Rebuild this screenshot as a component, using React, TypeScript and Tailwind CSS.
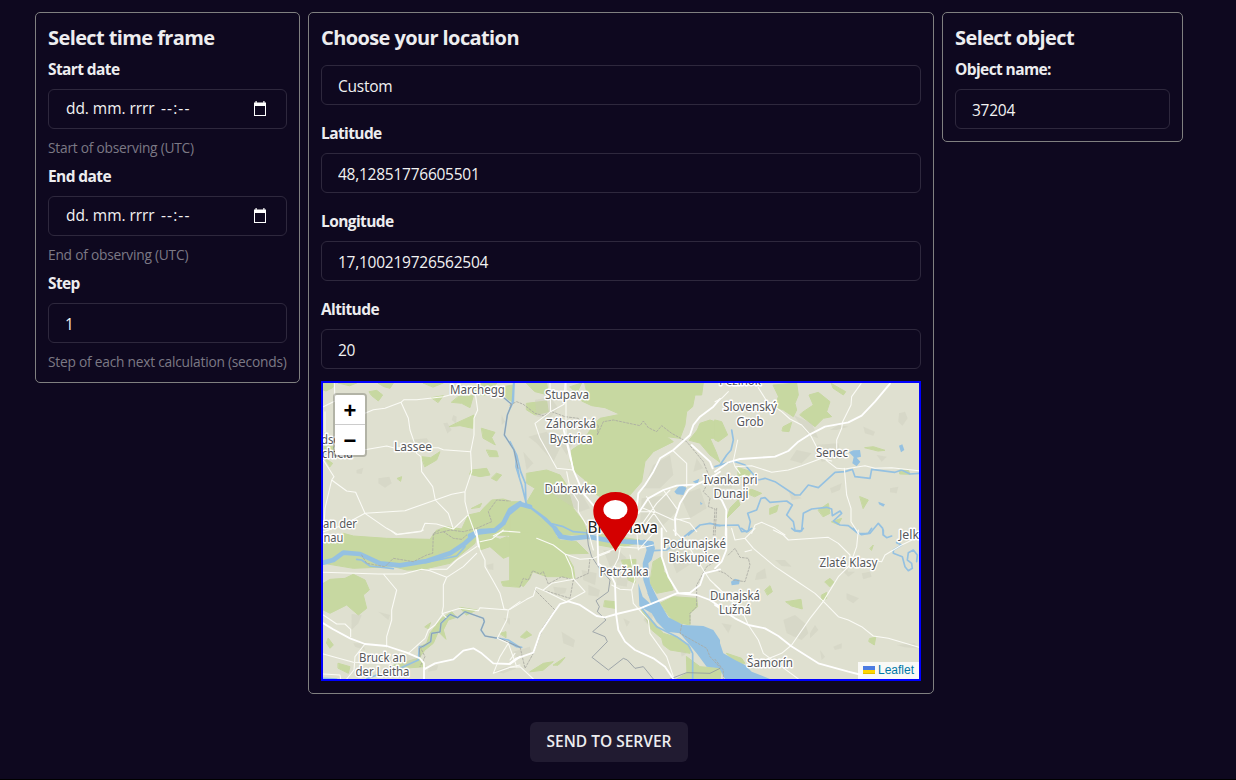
import React from "react";

type Tile = {
  x: number;
  y: number;
  wood: string;
  town: string;
  lake: string;
  river: string;
  stream: string;
  road: string;
  major: string;
  border: string;
  dashed: string;
};

// Every tile is drawn at three times its size on the page.
const tiles: Tile[] = [
  {
    x: 310,
    y: 375,
    wood: "M85 24L140 24L120 32ZM178 50L200 46L218 60L205 78L185 62ZM205 24L250 24L240 40L222 35ZM40 24L75 24L68 38L48 48L40 45ZM365 68L400 62L385 82ZM340 24L400 24L370 36ZM445 65L490 62L480 98L455 85L425 82ZM490 34L520 24L560 24L545 50L520 62L500 55ZM580 35L608 30L606 80L590 70ZM448 140L492 120L488 160L450 152L418 155ZM515 160L555 172L545 188L556 210L520 190ZM530 225L560 228L565 245L540 245ZM485 285L530 280L540 300L510 305L480 298ZM560 295L575 300L560 318L545 310ZM335 245L362 248L390 230L380 255L345 275ZM262 310L275 305L272 318ZM40 212L70 215L70 240L45 235ZM45 250L68 265L60 275ZM370 480L385 464L410 455L455 462L475 420L510 412L520 400L545 375L580 372L605 380L630 380L630 480ZM485 400L515 385L510 396Z",
    town: "M205 310L238 305L245 325L225 338L205 325ZM400 145L412 143L425 165L412 175ZM430 120L440 125L438 145L425 135ZM140 285L160 278L155 297L140 295ZM300 195L350 190L370 215L340 230L300 215ZM575 120L585 140L575 150Z",
    lake: "",
    river: "M480 482L510 468L555 466L580 445L600 405L630 385",
    stream: "M611 24L607 85M605 88L592 120L583 180L612 225L628 305M560 50L605 88",
    road: "M40 95L75 78L73 24M165 115L190 104L225 100L273 82L282 74L320 74L400 65L450 52L500 54M273 82L295 130L300 165L312 200L320 235L333 245L335 290L368 335L376 375L415 415L430 462M165 224L230 213L250 218L385 218L400 224L482 230M495 50L503 105L492 130L492 180L482 230L485 290L465 350L465 380L475 420L497 480M40 255L72 305L65 315L110 348L137 352L165 415L230 460L262 478L335 468L345 445L380 447L430 462L472 422M65 315L45 400L42 455M165 415L285 407L376 375L425 358L465 350M40 470L100 450L165 415M550 482L580 468L630 472M45 170L45 110",
    major: "",
    border: "M560 50L605 88L592 120L583 180L612 225L624 280",
    dashed: "M370 478L420 465L460 470L500 460L545 440L535 410L560 375L600 378",
  },
  {
    x: 510,
    y: 375,
    wood: "M225 24L580 24L575 60L555 60L548 95L530 110L525 150L510 190L470 185L490 200L430 230L405 260L395 320L360 360L270 365L230 340L225 315L195 290L180 260L185 225L215 205L250 150L270 130L330 118L285 98L245 92L215 78L230 55ZM50 24L110 24L115 60L75 50ZM180 35L215 24L200 55ZM50 85L110 78L115 110L75 120L50 105ZM50 295L110 285L150 300L170 330L190 400L220 440L235 480L130 480L45 390L75 340L50 325ZM0 385L50 390L130 480L0 480ZM538 195L562 165L570 145L600 135L630 145L630 190L600 190L618 230L630 262L600 240L570 205ZM290 440L340 430L330 470Z",
    town: "M75 75L120 65L145 100L120 130L80 125ZM55 185L110 170L150 220L130 260L80 205ZM400 340L430 270L480 240L490 300L450 340ZM40 230L70 265L50 285ZM125 170L190 205L170 240ZM395 370L480 360L500 410L440 470L390 440ZM510 360L570 340L590 400L540 430ZM560 250L580 280L550 290ZM100 340L200 330L240 400L210 410Z",
    lake: "M493 350L510 330L530 338L520 360L500 358ZM548 320L568 311L563 327ZM570 380L578 386L572 390Z",
    river: "M0 412L30 387L60 395",
    stream: "M12 24L10 80L0 100M20 240L18 275L35 330L50 390M0 200L20 240L32 290L46 325L48 388L95 425L150 478M60 395L110 432L155 478M120 445L160 455L190 470L270 477M535 480L570 450L600 445L630 452",
    road: "M120 24L122 110L75 145L90 190L140 280L190 285M122 110L162 88L165 24M168 24L168 180L182 240L190 285M170 290L180 340L205 380L205 410L230 450M490 228L530 265L530 335M385 410L435 410L490 435L540 430M460 345L500 400M480 345L440 385L380 470M400 400L430 412L470 470M410 365L435 410L405 450M495 430L540 445L560 470",
    major: "M160 160L190 285L220 355L262 405M630 72L610 95L570 125L550 150L540 180L490 225L450 250L430 290L405 330L385 355L380 400M385 415L415 370L460 345L500 332L560 328L600 310L630 290M497 480L495 430L510 385L535 345L560 328M545 210L600 260L608 280",
    border: "",
    dashed: "M0 90L20 80L40 88L75 115L100 122L125 110L165 125L205 130L225 152L265 150L262 180L280 140L310 135L390 152L400 138L415 158L440 170L455 152L485 175L530 200L580 260L600 310L580 350L600 370L595 395L615 402L610 480",
  },
  {
    x: 715,
    y: 375,
    wood: "M175 30L245 24L250 60L240 85L245 105L235 125L205 105L180 95L190 65ZM265 110L295 90L282 60L310 52L345 80L335 110L350 125L325 130L300 155L255 120ZM350 26L392 50L385 60L355 40ZM0 135L20 140L38 180L10 200L0 195ZM205 155L230 142L222 170L202 168ZM435 365L460 375L445 400ZM70 278L110 290L95 310L70 305ZM165 400L190 390L185 410L165 418ZM310 405L340 385L345 415L325 425ZM555 285L580 285L585 298L555 297ZM70 375L75 390L35 430L45 400ZM85 350L110 343L140 355L120 365ZM450 218L475 215L510 226L490 228ZM350 440L380 430L370 448Z",
    town: "M552 115L570 110L578 130L562 152L550 140ZM300 210L370 205L380 250L320 260ZM245 225L290 235L260 265L225 255ZM445 155L480 170L475 182L450 175ZM345 340L380 325L375 345L350 355ZM525 340L550 335L545 355L525 352ZM485 240L515 245L500 260ZM5 300L60 300L50 340L0 340ZM220 345L260 370L230 375ZM235 120L290 145L310 190L280 180ZM345 165L370 150L400 155L365 165Z",
    lake: "M402 232L415 226L435 225L438 245L425 248L436 260L425 274L412 265L416 246ZM552 212L562 208L568 225L558 232ZM490 380L510 388L505 395L492 388Z",
    river: "",
    stream: "M15 270L35 240L48 225L55 195L50 165M0 275L55 258L90 270L130 315L150 310L180 320L240 360L255 360L280 330L310 338L360 292L390 290L412 283L420 305L465 310L470 283L540 292L560 285L585 297L612 295M0 452L70 450L80 470L100 468L106 440L98 415L125 405L138 370L150 368L165 382L215 378L232 390L215 420L235 440L240 466L260 468L265 415L290 402L335 397L350 402L352 422L375 408L380 415L355 438L375 450L400 452L430 476L465 475L490 445L503 460L505 480",
    road: "M130 38L155 78L200 110L225 132L260 150L285 178L320 245L365 280L390 282L450 272L480 280L530 278L612 287M438 26L410 65L408 90L383 140L380 160L365 195L365 225M55 260L60 275L110 272L170 292L220 285L260 272L320 250L350 258M388 280L395 360L408 400L408 440L432 478M0 80L20 70L40 50M68 195L62 225L55 258M110 475L120 450L140 442L180 460L210 480M0 330L90 300M60 275L75 295",
    major: "M0 290L40 262L75 252L180 245L220 228L250 200L285 178L330 155L400 142L440 122L480 80L525 26M0 360L20 375L34 405L32 480",
    border: "",
    dashed: "M5 400L0 480",
  },
  {
    x: 310,
    y: 530,
    wood: "M40 40L75 25L100 10L130 18L230 25L360 28L380 0L500 5L495 40L420 100L330 120L290 120L250 110L130 115L40 100ZM40 160L60 148L105 145L130 133L165 150L178 180L160 195L170 235L145 255L110 225L60 250L40 240ZM505 5L570 28L590 20L630 35L630 90L605 75L580 85L540 50L510 60ZM575 155L630 148L630 172L580 168ZM55 325L70 345L60 355L50 340ZM395 265L425 245L440 262L415 270L400 300L408 328L385 305L370 340L345 360L330 380L345 410L280 415L250 405L325 385L330 350L350 340L360 310ZM85 400L120 410L115 430L85 415ZM570 310L588 305L588 322ZM345 290L362 278L355 295ZM450 232L500 240L470 255Z",
    town: "M125 252L155 255L145 280L125 300ZM205 245L240 255L235 270ZM385 65L410 60L425 80L400 90ZM355 410L385 405L380 420L355 425ZM265 370L325 380L310 410L260 400ZM130 340L160 340L165 360L135 350ZM40 195L55 190L60 205ZM550 425L590 410L620 415L580 430ZM580 265L600 265L600 285ZM530 105L550 100L550 120L535 118Z",
    lake: "",
    river: "M40 98L70 90L100 68L150 72L210 100L270 106L350 93L420 70L465 40L500 8L550 2",
    stream: "M140 88L155 90L180 108L250 116M345 98L440 78L465 50M270 415L325 390L328 350L340 350L362 335L365 310L390 306L393 280L420 253L443 263L465 245L520 265L523 275L513 300L525 318L570 326L595 330L630 352M170 447L200 435M40 445L80 447",
    road: "M40 127L205 132L280 132L335 118L360 122L410 142L460 110L500 70M220 132L260 180L245 240L245 270L230 320L230 350M360 118L410 118L440 90L500 50M410 142L400 165L400 230L396 250L408 262M500 8L510 60L525 90L525 110L548 150L570 190L582 237L595 240L590 270L562 325M630 215L595 240L510 233L505 242L450 235L400 250L375 285L355 300L345 325L295 370M40 255L80 282L105 282L122 298L122 320M40 372L130 397L250 402M165 342L135 380L132 420L110 447M550 430L600 412L630 405M595 340L570 380L550 430M595 340L620 410M562 325L595 340M510 35L545 28L580 0M40 432L90 435L92 447M245 3L258 14L330 5L340 0",
    major: "M40 280L68 297L120 325L165 342L230 348L290 368L330 385L342 400L342 447M342 418L375 400L430 388L460 362L490 355L515 370L550 400L600 402L630 380M498 0L506 50",
    border: "M330 380L328 355L362 335L365 310L390 306L393 280L420 253L443 263L465 245L520 265L523 275L513 300L525 318L570 326L630 352",
    dashed: "M155 75L170 100L225 110L250 85L310 95L350 75L368 70L370 10L390 0M400 5L430 25L455 28L470 15M330 350L345 380L330 410",
  },
  {
    x: 510,
    y: 530,
    wood: "M0 8L130 10L150 30L200 35L235 70L168 72L190 110L195 145L155 140L110 140L68 125L60 145L40 170L25 160L0 168ZM265 12L390 30L380 40L320 55L265 45ZM430 95L455 80L462 125L475 140L490 180L440 190L420 160ZM450 220L490 200L560 205L563 230L540 250L540 285L490 275ZM395 240L430 275L460 310L510 325L540 350L540 370L480 360L460 345L455 325L425 300ZM285 212L315 215L315 235L282 230ZM32 320L50 303L65 315L45 325ZM130 405L165 382L155 395L145 405ZM60 425L100 400L130 395L100 420ZM530 380L570 410L630 415L630 447L500 447L530 430ZM335 90L378 88L375 160L355 150Z",
    town: "M155 305L195 330L190 352L160 340ZM215 120L260 130L255 165L220 150ZM235 165L270 180L265 200L235 195ZM320 130L355 140L350 170L320 165ZM280 60L330 65L350 85L300 110ZM470 20L520 50L560 90L500 130L480 80ZM130 170L170 175L165 190L135 195ZM445 200L420 290L400 270ZM510 350L530 370L515 380ZM340 265L360 275L350 290ZM10 365L60 350L65 370L20 385Z",
    lake: "M400 28L430 38L435 55L425 90L415 100L420 160L450 220L475 262L520 285L580 288L610 300L630 330L630 415L590 410L560 370L510 310L470 305L440 275L425 250L388 228L385 160L398 200L425 225L400 150L398 100L410 60Z",
    river: "M135 -5L150 20L185 25L235 20L300 32L400 38L425 40",
    stream: "M430 62L470 60L520 22L545 2M395 235L440 290L500 320L535 345L548 370L548 447M0 338L20 350L35 352M415 190L440 235L460 285",
    road: "M0 238L50 208L70 198L78 172L110 185L170 215L225 185L190 145L185 115L165 72L130 45L80 25M165 72L210 88L250 85L300 65M265 75L330 50L390 55L430 45M305 165L330 178L365 180L370 220L415 270L420 310L470 380L490 440M330 55L325 85L312 110L315 140M360 75L375 150L365 180M580 120L600 150L630 178M380 0L385 60L430 10M0 412L30 410L70 447M0 390L15 370M490 0L530 40L580 120M100 180L125 160L190 148M235 5L250 60",
    major: "M0 400L20 385L70 368L90 310L130 250L150 222L175 214L210 225L260 258L285 262L320 252L390 235L440 215L500 190L540 188L570 165L582 130L630 118M265 100L300 130L315 160L318 250L325 300L345 335L375 360L430 385L465 410L490 447M262 0L265 105M455 -5L455 80L475 140L505 190L560 195L600 210L630 230",
    border: "M230 0L235 45L245 80L265 110L300 150L295 185L258 212L268 230L262 245L288 270L248 305L285 320L292 335L246 382L295 420L340 385L352 390L375 415L400 410L430 447M480 447L530 428L600 430L630 415",
    dashed: "M30 170L40 145L55 150L68 122L90 132L100 125L115 162L155 140L190 150L180 205L100 180M240 85L235 130L190 150M75 180L135 240L100 290L70 370L45 415L30 350M630 85L590 110L560 165L560 230L540 250L540 280M515 285L510 310L590 355L600 380L630 412",
  },
  {
    x: 715,
    y: 530,
    wood: "M150 180L165 167L172 185L158 195ZM213 215L258 208L262 237L230 228ZM330 155L345 145L357 157L345 170ZM465 325L482 322L478 345L462 335ZM35 370L80 385L90 400L60 400ZM0 385L20 420L15 447L0 447ZM465 55L475 45L470 60ZM320 195L335 187L335 205L320 212Z",
    town: "M125 130L150 115L155 145L120 150ZM205 270L240 255L270 280L280 310L260 330L215 310ZM395 190L432 205L415 220L395 208ZM440 130L465 125L470 140L445 148ZM285 310L300 285L310 300L285 325ZM545 345L600 340L605 355L570 352ZM180 90L210 90L230 110L200 108ZM355 350L380 340L380 355L360 360ZM315 360L330 380L320 390ZM20 280L50 285L40 310ZM385 90L400 125L420 125L400 140L380 120Z",
    lake: "M48 155L60 146L75 150L72 163L50 166ZM0 315L12 330L25 370L60 390L90 405L110 425L165 447L30 447L0 390Z",
    river: "",
    stream: "M415 -5L430 10L440 14L460 10L470 -5M230 -5L240 3L255 5L265 -5M80 -5L95 6L110 -5M505 0L505 15L515 23L530 18M575 10L545 38L560 45L535 60L535 70L562 80L570 110L580 122L592 115L590 100L577 90L580 68L595 60L607 75L605 95",
    road: "M60 30L90 25L115 55L180 110L240 150L300 190L325 214L370 260L400 270L440 290L475 318L520 325L612 352M175 0L205 15L220 30L340 22L370 40L405 75L405 105M430 0L425 50L405 105L370 140L325 214L285 265L230 345L200 370L150 390M0 165L80 240L100 285L130 330L145 370L200 410L250 447M612 20L560 45L510 75L500 95L440 85M60 30L90 25L120 -5M60 30L50 -5M90 65L110 60",
    major: "M0 225L60 265L100 285L150 295L190 318L228 348L310 400L400 425L440 435M34 -5L34 60L20 95L0 115",
    border: "",
    dashed: "M40 75L60 55L75 82L100 85L105 105L90 155L55 150L30 130L0 118M0 388L25 420L25 447",
  },
];

type Label = [string, number, number, number];

// text, left edge, baseline, width
const labels: Label[] = [
  ["Marchegg", 450, 393.5, 55],
  ["Lassee", 394, 450.5, 38],
  ["Stupava", 545, 398.5, 44],
  ["Záhorská", 546, 428, 50],
  ["Bystrica", 549.5, 442.5, 43],
  ["Dúbravka", 544.5, 492.5, 52],
  ["Pezinok", 719, 385, 42],
  ["Slovenský", 723, 411, 54],
  ["Grob", 736.5, 425.5, 27],
  ["Senec", 816, 456.5, 32],
  ["Ivanka pri", 703.5, 483.5, 54],
  ["Dunaji", 713.5, 497.5, 35],
  ["Podunajské", 663, 547.5, 63],
  ["Biskupice", 668.5, 561.5, 51],
  ["Petržalka", 599.5, 575.5, 49],
  ["Zlaté Klasy", 819.5, 566.5, 58],
  ["Dunajská", 710, 599.5, 50],
  ["Lužná", 719, 613.5, 32],
  ["Šamorín", 747, 666.5, 46],
  ["Bruck an", 359, 661.5, 47],
  ["der Leitha", 355.5, 675.5, 54],
  ["an der", 323, 527.5, 34],
  ["nau", 323.5, 541.5, 20],
  ["dsc", 321, 443.5, 18],
  ["chfeld", 322, 458, 31],
  ["Jelka", 899, 538.5, 27],
];

function Layer({ children }: { children: (t: Tile) => React.ReactNode }) {
  return (
    <>
      {tiles.map((t) => (
        <g key={`${t.x}-${t.y}`} transform={`translate(${t.x} ${t.y}) scale(0.33333)`}>
          {children(t)}
        </g>
      ))}
    </>
  );
}

function MapView() {
  return (
    <div className="relative mt-3 h-[300px] w-full overflow-hidden border-2 border-[#0000ff] bg-[#dfe0d0]">
      <svg className="block h-[296px] w-[596px]" viewBox="323 383 596 296" strokeLinejoin="round" strokeLinecap="round" fill="none">
        <Layer>{(t) => <path d={t.wood} fill="#c7d8a1" stroke="#c7d8a1" strokeWidth="3" />}</Layer>
        <Layer>{(t) => <path d={t.town} fill="#c9cabb" fillOpacity="0.36" />}</Layer>
        <Layer>
          {(t) => (
            <>
              <path d={t.lake} fill="#95c1e1" />
              <path d={t.river} stroke="#95c1e1" strokeWidth="14" />
              <path d={t.stream} stroke="#95c1e1" strokeWidth="5" />
            </>
          )}
        </Layer>
        <Layer>
          {(t) => (
            <>
              <path d={t.border} stroke="#8e979f" strokeOpacity="0.8" strokeWidth="3" />
              <path d={t.dashed} stroke="#a9aaa2" strokeWidth="2.5" strokeDasharray="6 5" />
            </>
          )}
        </Layer>
        <Layer>
          {(t) => (
            <>
              <path d={t.road} stroke="#fbfbf6" strokeWidth="3.2" />
              <path d={t.major} stroke="#ffffff" strokeWidth="5.5" />
            </>
          )}
        </Layer>
        <g fontFamily="'Noto Sans', sans-serif" fontSize="12" fill="#58595b" stroke="#ffffff" strokeWidth="2.8" style={{ paintOrder: "stroke" }}>
          {labels.map(([text, x, y, w]) => (
            <text key={text} x={x} y={y} textLength={w} lengthAdjust="spacingAndGlyphs">
              {text}
            </text>
          ))}
          <text x="587.5" y="532.5" fontSize="15.5" fill="#222222" textLength="70.5" lengthAdjust="spacingAndGlyphs">
            Bratislava
          </text>
        </g>
        <path
          d="M615.5 551.5C611 543 601 530 596.500 522.500C594.500 519 593.300 515.500 593.300 511C593.300 500.500 602 492 615.500 492C629 492 638 500.500 638 511C638 515.500 636.500 519 634.500 522.500C630 530 620 543 615.500 551.500Z"
          fill="#d40000"
        />
        <ellipse cx="615.4" cy="509.600" rx="12" ry="9.600" fill="#ffffff" />
      </svg>
      <div className="absolute left-2.5 top-2.5 flex w-[34px] flex-col overflow-hidden rounded border-2 border-black/20 bg-clip-padding font-['Liberation_Sans',sans-serif] text-[22px] font-bold text-black">
        <button className="h-[30px] border-b border-[#cccccc] bg-white leading-[31px]">+</button>
        <button className="h-[30px] bg-white leading-[31px]">−</button>
      </div>
      <div className="absolute bottom-0 right-0 flex h-[17px] w-[61px] items-center gap-[3px] bg-white/80 pb-px pl-[5px] font-['Liberation_Sans',sans-serif] text-[12px] leading-4 text-[#0078a8]">
        <svg width="12" height="8" viewBox="0 0 12 8">
          <path fill="#4c7be1" d="M0 0h12v4H0z" />
          <path fill="#ffd500" d="M0 4h12v3H0z" />
          <path fill="#e0bc00" d="M0 7h12v1H0z" />
        </svg>
        Leaflet
      </div>
    </div>
  );
}

function Card({ title, className, children }: { title: string; className: string; children: React.ReactNode }) {
  return (
    <section className={`rounded-[5px] border border-[#808080] p-3 ${className}`}>
      <h2 className="h-[26px] whitespace-nowrap text-[20px] font-bold leading-[26px] tracking-[-0.6px]">{title}</h2>
      {children}
    </section>
  );
}

function Label({ children, className = "" }: { children: React.ReactNode; className?: string }) {
  return <label className={`block h-6 text-[15.5px] font-bold leading-[25px] tracking-[-0.6px] ${className}`}>{children}</label>;
}

function Field({ value, className = "mt-2" }: { value: string; className?: string }) {
  return (
    <input
      className={`block h-10 w-full rounded-md border border-[#2e283d] bg-transparent px-4 pt-[2px] text-[15.5px] tracking-[-0.25px] text-[#f2f2f2] outline-none ${className}`}
      defaultValue={value}
    />
  );
}

function DateField() {
  return (
    <div className="mt-2 flex h-10 items-center rounded-md border border-[#2e283d] pl-[17px] pr-5 text-[15.5px] text-[#f2f2f2]">
      <span className="w-[95px] whitespace-pre tracking-[-0.05px]">dd. mm. rrrr</span>
      <span className="whitespace-pre tracking-[1.1px]">--:--</span>
      <svg width="12" height="15" viewBox="0 0 12 15" className="mb-px ml-auto" fill="#ffffff">
        <path d="M1.500 0h1.200v1.500h6.600V0h1.200v1.500H12V15H0V1.500h1.500zM1 5v9h10V5z" fillRule="evenodd" />
      </svg>
    </div>
  );
}

function Help({ children }: { children: React.ReactNode }) {
  return <p className="mb-1.5 mt-2 h-[21px] whitespace-nowrap text-[13.75px] leading-[21px] tracking-[-0.23px] text-[#7c7985]">{children}</p>;
}

export default function App() {
  return (
    <main className="h-[780px] w-[1236px] overflow-hidden border-b border-black bg-[#0e081f] pl-[35px] pt-3 font-['Open_Sans','Noto_Sans',sans-serif] text-[#ededef]">
      <div className="flex items-start gap-2">
        <Card title="Select time frame" className="h-[371px] w-[265px]">
          <Label className="mt-1.5">Start date</Label>
          <DateField />
          <Help>Start of observing (UTC)</Help>
          <Label>End date</Label>
          <DateField />
          <Help>End of observing (UTC)</Help>
          <Label>Step</Label>
          <Field value="1" />
          <Help>Step of each next calculation (seconds)</Help>
        </Card>
        <Card title="Choose your location" className="h-[682px] w-[626px]">
          <Field value="Custom" className="mt-3.5" />
          <Label className="mt-4">Latitude</Label>
          <Field value="48,12851776605501" />
          <Label className="mt-4">Longitude</Label>
          <Field value="17,100219726562504" />
          <Label className="mt-4">Altitude</Label>
          <Field value="20" />
          <MapView />
        </Card>
        <Card title="Select object" className="h-[130px] w-[241px]">
          <Label className="mt-1.5">Object name:</Label>
          <Field value="37204" />
        </Card>
      </div>
      <button className="ml-[495px] mt-7 flex h-10 w-[158px] items-center justify-center whitespace-nowrap rounded-md bg-[#211b31] text-[15.5px] font-semibold">
        SEND TO SERVER
      </button>
    </main>
  );
}
